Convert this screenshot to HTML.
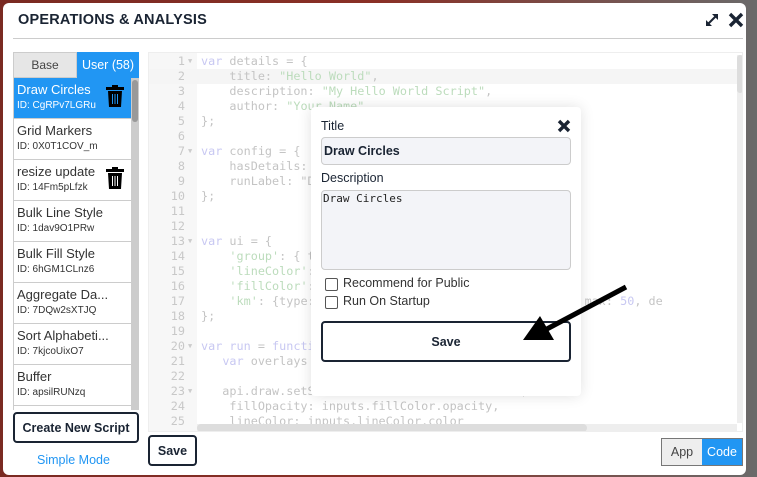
<!DOCTYPE html>
<html><head><meta charset="utf-8"><style>
*{box-sizing:border-box;margin:0;padding:0}
body{width:757px;height:477px;overflow:hidden;background:linear-gradient(90deg,#7a2a22 0%,#8a3026 50%,#6a6a6a 100%);font-family:"Liberation Sans",sans-serif;position:relative}
.modal{position:absolute;left:3px;top:3px;width:743px;height:472px;background:#fff;border-radius:6px}
.abs{position:absolute}
.title{left:18px;top:12px;font-weight:bold;font-size:14.5px;color:#1a2433;letter-spacing:0.2px}
.hr{left:13px;top:38px;width:730px;height:1px;background:#ccc}
.tabs{left:13px;top:52px;width:126px;height:26px;display:flex;font-size:12px}
.tabs div{display:flex;align-items:center;justify-content:center}
.list{left:13px;top:78px;width:118px;height:332px;overflow:hidden;border-left:1px solid #ccc}
.item{height:41px;border-bottom:1px solid #ccc;padding:4px 0 0 3px;position:relative;color:#333}
.item .n{font-size:13px}
.item .i{font-size:10px;margin-top:3px}
.sel{background:#2196f3;color:#fff}
.sel .n,.sel .i{color:#fff}
.trash{position:absolute;right:7px;top:7px}
.vs{left:131px;top:78px;width:8px;height:332px;background:#ccc}
.btn{border:2px solid #1a2433;border-radius:4px;font-weight:bold;color:#1a2433;display:flex;align-items:center;justify-content:center;background:#fff}
.code{left:148px;top:52px;width:595px;height:380px;background:#fff;border:1px solid #eee;overflow:hidden}
.gut{position:absolute;left:0;top:0;width:48px;height:100%;background:#f7f7f7}
.ln{position:absolute;left:0;width:36px;text-align:right;color:#c8c8c8}
.f{position:absolute;left:39px;font-size:7px!important;color:#ccc}
.cl{position:absolute;left:52px;white-space:pre;color:#c4c4c4}
.code div{font-family:"DejaVu Sans Mono","Liberation Mono",monospace;font-size:11.8px;line-height:15px}
.k{color:#c8c8f2}.s{color:#bcdcbc}.nm{color:#c8c8f2}
.pop{left:311px;top:107px;width:270px;height:289px;background:#fff;border-radius:4px;box-shadow:0 0 14px rgba(0,0,0,.12)}
.lbl{font-size:12.5px;color:#1a2433}
.inp{background:#f3f4f8;border:1px solid #ccc;border-radius:4px}
.cb{width:13px;height:13px;border:1px solid #555;border-radius:2px;background:#fff}
</style></head><body>
<div class="modal">
</div>
<div class="abs title">OPERATIONS &amp; ANALYSIS</div>
<svg class="abs" style="left:704px;top:12px" width="16" height="16" viewBox="0 0 16 16"><path d="M3 13L13 3" stroke="#1a2433" stroke-width="2"/><path d="M8 2h6v6z M2 8v6h6z" fill="#1a2433"/></svg>
<svg class="abs" style="left:728px;top:12px" width="16" height="16" viewBox="0 0 16 16"><path d="M2 2L14 14M14 2L2 14" stroke="#1a2433" stroke-width="3.4"/></svg>
<div class="abs hr"></div>
<div class="abs tabs"><div style="width:64px;background:#e6e6e6;color:#444;border:1px solid #ccc">Base</div><div style="width:62px;background:#2196f3;color:#fff;font-size:12.5px">User (58)</div></div>
<div class="abs list">
<div class="item sel"><div class="n">Draw Circles</div><div class="i">ID: CgRPv7LGRu</div><svg class="trash" width="18" height="22" viewBox="0 0 18 22"><rect x="0" y="2" width="18" height="3" fill="#000"/><rect x="6" y="0" width="6" height="3" fill="#000"/><path d="M2 6h14l-1 16H3z" fill="#000"/><path d="M6.5 9v10M9 9v10M11.5 9v10" stroke="#2196f3" stroke-width="1"/></svg></div>
<div class="item"><div class="n">Grid Markers</div><div class="i">ID: 0X0T1COV_m</div></div>
<div class="item"><div class="n">resize update</div><div class="i">ID: 14Fm5pLfzk</div><svg class="trash" width="18" height="22" viewBox="0 0 18 22"><rect x="0" y="2" width="18" height="3" fill="#000"/><rect x="6" y="0" width="6" height="3" fill="#000"/><path d="M2 6h14l-1 16H3z" fill="#000"/><path d="M6.5 9v10M9 9v10M11.5 9v10" stroke="#fff" stroke-width="1"/></svg></div>
<div class="item"><div class="n">Bulk Line Style</div><div class="i">ID: 1dav9O1PRw</div></div>
<div class="item"><div class="n">Bulk Fill Style</div><div class="i">ID: 6hGM1CLnz6</div></div>
<div class="item"><div class="n">Aggregate Da...</div><div class="i">ID: 7DQw2sXTJQ</div></div>
<div class="item"><div class="n">Sort Alphabeti...</div><div class="i">ID: 7kjcoUixO7</div></div>
<div class="item"><div class="n">Buffer</div><div class="i">ID: apsilRUNzq</div></div>
</div>
<div class="abs vs"><div style="margin:2px 1px;height:42px;background:#999;border-radius:3px"></div></div>
<div class="abs btn" style="left:13px;top:412px;width:126px;height:31px;font-size:12.5px">Create New Script</div>
<div class="abs" style="left:37px;top:453px;font-size:12.5px;color:#2196f3">Simple Mode</div>

<div class="abs code">
<div class="gut"></div>
<div style="position:absolute;left:0;top:16px;width:595px;height:15px;background:#f5f5f5"></div>
<div class="ln" style="top:1px">1</div><div class="f" style="top:1px">▼</div><div class="cl" style="top:1px"><span class="k">var</span> details = {</div>
<div class="ln" style="top:16px">2</div><div class="cl" style="top:16px">    title: <span class="s">"Hello World"</span>,</div>
<div class="ln" style="top:31px">3</div><div class="cl" style="top:31px">    description: <span class="s">"My Hello World Script"</span>,</div>
<div class="ln" style="top:46px">4</div><div class="cl" style="top:46px">    author: <span class="s">"Your Name"</span></div>
<div class="ln" style="top:61px">5</div><div class="cl" style="top:61px">};</div>
<div class="ln" style="top:76px">6</div>
<div class="ln" style="top:91px">7</div><div class="f" style="top:91px">▼</div><div class="cl" style="top:91px"><span class="k">var</span> config = {</div>
<div class="ln" style="top:106px">8</div><div class="cl" style="top:106px">    hasDetails:</div>
<div class="ln" style="top:121px">9</div><div class="cl" style="top:121px">    runLabel: "D</div>
<div class="ln" style="top:136px">10</div><div class="cl" style="top:136px">};</div>
<div class="ln" style="top:151px">11</div>
<div class="ln" style="top:166px">12</div>
<div class="ln" style="top:181px">13</div><div class="f" style="top:181px">▼</div><div class="cl" style="top:181px"><span class="k">var</span> ui = {</div>
<div class="ln" style="top:196px">14</div><div class="cl" style="top:196px">    <span class="s">'group'</span>: { t                            ,</div>
<div class="ln" style="top:211px">15</div><div class="cl" style="top:211px">    <span class="s">'lineColor'</span>:                             },</div>
<div class="ln" style="top:226px">16</div><div class="cl" style="top:226px">    <span class="s">'fillColor'</span>:                            },</div>
<div class="ln" style="top:241px">17</div><div class="cl" style="top:241px">    <span class="s">'km'</span>: {type:                            <span class="nm">1</span> min: <span class="nm">0</span>, max: <span class="nm">50</span>, de</div>
<div class="ln" style="top:256px">18</div><div class="cl" style="top:256px">};</div>
<div class="ln" style="top:271px">19</div>
<div class="ln" style="top:286px">20</div><div class="f" style="top:286px">▼</div><div class="cl" style="top:286px"><span class="k">var</span> <span class="k">run</span> = <span class="k">functi</span></div>
<div class="ln" style="top:301px">21</div><div class="cl" style="top:301px">   <span class="k">var</span> overlays                           up.id);</div>
<div class="ln" style="top:316px">22</div>
<div class="ln" style="top:331px">23</div><div class="f" style="top:331px">▼</div><div class="cl" style="top:331px">   api.draw.setS                           or,</div>
<div class="ln" style="top:346px">24</div><div class="cl" style="top:346px">    fillOpacity: inputs.fillColor.opacity,</div>
<div class="ln" style="top:361px">25</div><div class="cl" style="top:361px">    lineColor: inputs.lineColor.color</div>
<div style="position:absolute;left:588px;top:2px;width:6px;height:368px;background:#eee"><div style="height:38px;background:#ddd;border-radius:3px"></div></div>
<div style="position:absolute;left:48px;top:371px;width:540px;height:8px;background:#eee"><div style="width:390px;height:8px;background:#ddd;border-radius:4px"></div></div>
</div>
<div class="abs btn" style="left:148px;top:435px;width:49px;height:31px;font-size:12.5px">Save</div>
<div class="abs" style="left:661px;top:438px;width:82px;height:28px;border:1px solid #777;display:flex;font-size:12.5px">
<div style="width:40px;background:#eee;color:#444;display:flex;align-items:center;justify-content:center">App</div>
<div style="flex:1;background:#2196f3;color:#fff;display:flex;align-items:center;justify-content:center">Code</div></div>

<div class="abs pop">
<div class="abs lbl" style="left:10px;top:12px">Title</div>
<svg class="abs" style="left:246px;top:12px" width="14" height="14" viewBox="0 0 14 14"><path d="M2 2L12 12M12 2L2 12" stroke="#1a2433" stroke-width="3.4"/></svg>
<div class="abs inp" style="left:10px;top:30px;width:250px;height:28px;padding:6px 2px;font-size:12.5px;font-weight:bold;color:#1a2433">Draw Circles</div>
<div class="abs lbl" style="left:10px;top:64px">Description</div>
<div class="abs inp" style="left:10px;top:83px;width:250px;height:80px;padding:1px 1px;font-family:'DejaVu Sans Mono',monospace;font-size:11px;color:#222">Draw Circles</div>
<div class="abs cb" style="left:14px;top:171px"></div><div class="abs lbl" style="left:32px;top:169px;color:#333">Recommend for Public</div>
<div class="abs cb" style="left:14px;top:189px"></div><div class="abs lbl" style="left:32px;top:187px;color:#333">Run On Startup</div>
<div class="abs btn" style="left:10px;top:214px;width:250px;height:41px;font-size:12.5px">Save</div>
</div>
<svg class="abs" style="left:0;top:0" width="757" height="477"><path d="M626 287L545 330" stroke="#000" stroke-width="5"/><path d="M523 340L540 316L554 340z" fill="#000"/></svg>
</body></html>
